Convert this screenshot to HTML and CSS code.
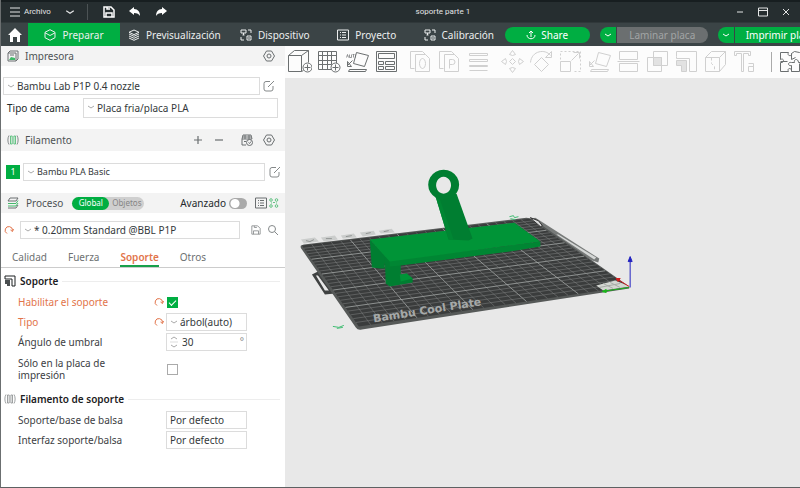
FILE: index.html
```html
<!DOCTYPE html>
<html lang="es">
<head>
<meta charset="utf-8">
<title>soporte parte 1</title>
<link rel="stylesheet" href="styles.css">
</head>
<body>
<svg class="defs" aria-hidden="true">
  <symbol id="chev" viewBox="0 0 8 8"><path d="M1 3l3 2 3-2"/></symbol>
  <symbol id="gear" viewBox="0 0 12 12"><path d="M3.500 1h5l3 5-3 5h-5l-3-5z"/><circle cx="6" cy="6" r="2"/></symbol>
  <symbol id="edit" viewBox="0 0 12 12"><path d="M7 1.500H3a2 2 0 0 0-2 2V9a2 2 0 0 0 2 2h5a2 2 0 0 0 2-2V6M5 7l6-6"/></symbol>
  <symbol id="spool" viewBox="0 0 12 12"><path d="M2 1.500C.5 4 .5 8 2 10.500M10 1.500c1.500 2.500 1.500 6.500 0 9"/><path class="tint" d="M3.500 2v8M5.200 2v8M6.900 2v8M8.500 2v8M3.500 2h1.700M3.500 10h1.700M6.900 2h1.600M6.900 10h1.600"/></symbol>
  <symbol id="undo" viewBox="0 0 10 10"><path d="M3 8.500A3.700 3.700 0 1 1 8.500 5.500M6.500 5l2 1.500L9.500 4"/></symbol>
  <symbol id="device" viewBox="0 0 12 12"><path d="M1 1h5v3H1zM2.500 6h2M3.500 4v2M7 7h4v4H7zM8 9h2M8 1h3v3M1 8v3h3"/></symbol>
  <symbol id="disk" viewBox="0 0 12 12"><path d="M1 1h7l3 3v7H1zM3 11V7h6v4M4 1v2h3"/></symbol>
</svg>
<div class="app">
  <header class="titlebar">
    <button class="menu"><svg class="ic12" viewBox="0 0 12 12"><path d="M1 2h10M1 6h10M1 10h10"/></svg>Archivo</button>
    <button class="drop" aria-label="Más"><svg class="ic10" viewBox="0 0 8 8"><path d="M1 3l3 2 3-2"/></svg></button>
    <div class="quick">
      <button aria-label="Guardar"><svg class="ic12 strong"><use href="#disk"/></svg></button>
      <button aria-label="Deshacer"><svg class="ic12 solid" viewBox="0 0 12 12"><path d="M0 5l5-4v2c4 0 6 3 6 7-1-2-3-3-6-3v2z"/></svg></button>
      <button aria-label="Rehacer"><svg class="ic12 solid" viewBox="0 0 12 12"><path d="M12 5L7 1v2C3 3 1 6 1 10c1-2 3-3 6-3v2z"/></svg></button>
    </div>
    <h1>soporte parte 1</h1>
    <div class="win">
      <button aria-label="Minimizar"><svg class="ic10" viewBox="0 0 10 10"><path d="M2 5h6"/></svg></button>
      <button aria-label="Maximizar"><svg class="ic10" viewBox="0 0 10 10"><path d="M.5 1h9v8h-9zM.5 3.500h9"/></svg></button>
      <button aria-label="Cerrar"><svg class="ic10" viewBox="0 0 10 10"><path d="M2 2l6 6M8 2L2 8"/></svg></button>
    </div>
  </header>

  <nav class="tabbar">
    <a class="home" href="#" aria-label="Inicio"><svg class="ic14 solid" viewBox="0 0 14 14"><path d="M7 0l7 7h-2v7H9V9H5v5H2V7H0z"/></svg></a>
    <a class="tab on" href="#"><svg class="ic12" viewBox="0 0 12 12"><path d="M6 .7l5 2.600v5.400l-5 2.600-5-2.600V3.300zM1 3.800L6 6.500l5-2.700"/></svg>Preparar</a>
    <a class="tab" href="#"><svg class="ic12" viewBox="0 0 12 12"><path d="M6 1l5 2.300-5 2.300-5-2.300zM1 5l5 2.300L11 5M1 7l5 2.300L11 7M1 9l5 2.300L11 9"/></svg>Previsualización</a>
    <a class="tab" href="#"><svg class="ic12"><use href="#device"/></svg>Dispositivo</a>
    <a class="tab" href="#"><svg class="ic12" viewBox="0 0 12 12"><path d="M.5 1h11v10H.5zM3 3.500h1M5 3.500h4M3 6h1M5 6h4M3 8.500h1M5 8.500h4"/></svg>Proyecto</a>
    <a class="tab" href="#"><svg class="ic12"><use href="#device"/></svg>Calibración</a>
    <div class="actions">
      <button class="pill share"><svg class="ic10" viewBox="0 0 10 10"><path d="M5 7V1M3 3l2-2 2 2M1 5c0 5 8 5 8 0"/></svg>Share</button>
      <div class="split"><button class="arrow" aria-label="Opciones de laminado"><svg class="ic8"><use href="#chev"/></svg></button><button class="main" disabled>Laminar placa</button></div>
      <div class="split"><button class="arrow" aria-label="Opciones de impresión"><svg class="ic8"><use href="#chev"/></svg></button><button class="main print">Imprimir placa</button></div>
    </div>
  </nav>

  <div class="work">
    <aside class="side">
      <div class="head"><svg class="ic12" viewBox="0 0 12 12"><path d="M1 3h8v8H1zM1 3l2-2h8v8l-2 2M3 5h4"/><path class="leaf" d="M2 10l2-3 4 1v2z"/></svg><h2>Impresora</h2><button aria-label="Ajustes de impresora"><svg class="ic12"><use href="#gear"/></svg></button></div>
      <div class="row printer">
        <div class="field"><svg class="ic8"><use href="#chev"/></svg><select aria-label="Impresora"><option>Bambu Lab P1P 0.4 nozzle</option></select></div>
        <button aria-label="Editar impresora"><svg class="ic12"><use href="#edit"/></svg></button>
      </div>
      <div class="row bed"><label for="bed">Tipo de cama</label>
        <div class="field"><svg class="ic8"><use href="#chev"/></svg><select id="bed"><option>Placa fria/placa PLA</option></select></div></div>

      <div class="head filament"><svg class="ic12 green"><use href="#spool"/></svg><h2>Filamento</h2>
        <button aria-label="Añadir"><svg class="ic10 cross" viewBox="0 0 10 10"><path d="M1 5h8M5 1v8"/></svg></button>
        <button class="minus" aria-label="Quitar"><svg class="ic10 cross" viewBox="0 0 10 10"><path d="M1 5h8"/></svg></button>
        <button class="ams" aria-label="AMS"><svg class="ic12" viewBox="0 0 12 12"><path d="M1 5l1-4h8l1 4M1 5h10M1 5v6h4M2 3h8M4 1v4M8 1v4M3 7.500h2"/><circle cx="8.500" cy="8.500" r="3"/><path d="M7.500 8.500l1 1 1.500-2"/></svg></button>
        <button aria-label="Ajustes de filamento"><svg class="ic12"><use href="#gear"/></svg></button></div>
      <div class="row spoolrow"><span class="num">1</span>
        <div class="field"><svg class="ic8"><use href="#chev"/></svg><select aria-label="Filamento 1"><option>Bambu PLA Basic</option></select></div>
        <button aria-label="Editar filamento"><svg class="ic12"><use href="#edit"/></svg></button></div>

      <div class="head process"><svg class="ic12" viewBox="0 0 12 12"><path d="M3 1h8L9 4H1zM1 11h8l2-3"/><path class="leafline" d="M1 6.500h8l2-3M1 9h8l2-3"/></svg><h2>Proceso</h2>
        <div class="seg"><button class="on">Global</button><button>Objetos</button></div>
        <label for="adv">Avanzado</label><input id="adv" class="switch" type="checkbox">
        <button class="list" aria-label="Lista"><svg class="ic12" viewBox="0 0 12 12"><path d="M.5 1h11v10H.5zM3 3.500h1M5 3.500h4M3 6h1M5 6h4M3 8.500h1M5 8.500h4"/></svg></button>
        <button class="cmp" aria-label="Comparar"><svg class="ic10 leafline" viewBox="0 0 10 10"><circle cx="2" cy="2" r="1.300"/><circle cx="7.500" cy="2" r="1.300"/><circle cx="2" cy="8" r="1.300"/><circle cx="7.500" cy="8" r="1.300"/><path d="M4 4.500l2 0M2 5h1M7 5h1"/></svg></button></div>
      <div class="row preset"><button class="reset" aria-label="Restablecer"><svg class="ic10"><use href="#undo"/></svg></button>
        <div class="field"><svg class="ic8"><use href="#chev"/></svg><select aria-label="Perfil"><option>* 0.20mm Standard @BBL P1P</option></select></div>
        <button aria-label="Guardar perfil"><svg class="ic10" viewBox="0 0 12 12"><use href="#disk"/></svg></button>
        <button aria-label="Buscar"><svg class="ic12" viewBox="0 0 12 12"><circle cx="5" cy="5" r="3.500"/><path d="M7.500 7.500L11 11"/></svg></button></div>

      <nav class="pages"><a href="#">Calidad</a><a href="#">Fuerza</a><a class="on" href="#">Soporte</a><a href="#">Otros</a></nav>

      <form class="form">
        <h3><svg class="ic12" viewBox="0 0 12 12"><path d="M1 1h10v10H8V4H1z"/><path class="fill" d="M1 5h5v6H3V9H1z"/></svg>Soporte</h3>
        <div class="opt changed"><label for="en">Habilitar el soporte</label><svg class="ic10"><use href="#undo"/></svg><input id="en" class="tick" type="checkbox" checked></div>
        <div class="opt changed"><label for="ty">Tipo</label><svg class="ic10"><use href="#undo"/></svg><div class="field"><svg class="ic8"><use href="#chev"/></svg><select id="ty"><option>árbol(auto)</option></select></div></div>
        <div class="opt"><label for="an">Ángulo de umbral</label><div class="field"><svg class="step" viewBox="0 0 8 14"><path d="M1 4l3-2 3 2M1 10l3 2 3-2"/><path class="rule" d="M0 7h8"/></svg><input id="an" type="number" value="30"><span class="deg">°</span></div></div>
        <div class="opt tall"><label for="pl">Sólo en la placa de impresión</label><input id="pl" class="tick" type="checkbox"></div>
        <h3><svg class="ic12 grey"><use href="#spool"/></svg>Filamento de soporte</h3>
        <div class="opt"><label for="ba">Soporte/base de balsa</label><div class="field plain"><select id="ba"><option>Por defecto</option></select></div></div>
        <div class="opt"><label for="inf">Interfaz soporte/balsa</label><div class="field plain"><select id="inf"><option>Por defecto</option></select></div></div>
      </form>
    </aside>

    <main class="view">
      <div class="tools">
        <button aria-label="Añadir objeto"><svg viewBox="0.5 0.5 24 24"><path d="M1 6h13v16H1zM1 6l6-5h14l-7 5M21 1v12M14 22l2-1"/><circle class="paper" cx="20" cy="18" r="4.500"/><path d="M20 15v6M17 18h6"/></svg></button>
        <button aria-label="Añadir placa"><svg viewBox="0.5 0.5 24 24"><path d="M2 2h18v18H2zM6 2v18M11 2v18M15 2v18M2 6h18M2 11h18M2 15h18"/><circle class="paper" cx="19" cy="18" r="4.500"/><path d="M19 15v6M16 18h6"/></svg></button>
        <button aria-label="Orientar"><svg viewBox="0.5 0.5 24 24"><path d="M11 3l12 3-4 11-11-3zM4 20h17l-1 2H3zM7 11l-5 5M2 12v5h4z"/><path class="fine" d="M1 8l1-3 1 3M4 5v3h2V5M7 5h2M8 5v3M10 5v3"/></svg></button>
        <button class="gap" aria-label="Organizar"><svg viewBox="0.5 0.5 24 24"><path d="M2 2h20v20H2zM4 4h16v5H4zM4 12h5v3H4zM4 17h5v3H4zM11 12h9v3h-9zM11 17h9v3h-9z"/></svg></button>
        <button disabled aria-label="Copiar 0"><svg viewBox="0.5 0.5 24 24"><path d="M6 19H2V2h12l3 3M7 5h10l4 4v13H7z"/><ellipse cx="14" cy="14" rx="3" ry="5"/></svg></button>
        <button disabled aria-label="Copiar P"><svg viewBox="0.5 0.5 24 24"><path d="M6 19H2V2h12l3 3M7 5h10l4 4v13H7zM12 19v-9h3a2.500 2.500 0 0 1 0 5h-3"/></svg></button>
        <button class="gap" disabled aria-label="Capas"><svg viewBox="0.5 0.5 24 24"><path d="M3 4h18v2H3zM3 10h18v2H3zM3 16h18v1H3zM3 21h18"/></svg></button>
        <button disabled aria-label="Mover"><svg viewBox="0.5 0.5 24 24"><path d="M9 5l3-4 3 4-3 1zM9 19l3 4 3-4-3-1zM5 9l-4 3 4 3 1-3zM19 9l4 3-4 3-1-3zM12 9l3 3-3 3-3-3z"/></svg></button>
        <button disabled aria-label="Rotar"><svg viewBox="0.5 0.5 24 24"><path d="M12 8l7 7-7 7-7-7zM1 13C2 1 16-1 21 6M22 2v6h-6z"/></svg></button>
        <button disabled aria-label="Escalar"><svg viewBox="0.5 0.5 24 24"><path d="M2 12h10v10H2zM13 11l7-7M15 3h6v6"/><path stroke-dasharray="2 2" d="M2 10V2h20v20h-8"/></svg></button>
        <button disabled aria-label="Apoyar cara"><svg viewBox="0.5 0.5 24 24"><path d="M11 3l12 3-4 11-11-3zM4 20h17l-1 2H3zM7 11l-5 5M2 12v5h4z"/></svg></button>
        <button disabled aria-label="Cortar"><svg viewBox="0.5 0.5 24 24"><path d="M3 2h18v8H3zM3 14h18v8H3zM1 12h22"/></svg></button>
        <button disabled aria-label="Booleano"><svg viewBox="0.5 0.5 24 24"><path d="M2 8h14v14H2zM8 2h14v14H8z"/><path class="hatch" d="M8 8h8v8H8z"/></svg></button>
        <button disabled aria-label="Pintar soportes"><svg viewBox="0.5 0.5 24 24"><path d="M2 7V2h20v20h-7V9H2z"/><path class="hatch" d="M2 11h10v11H7v-6H2z"/></svg></button>
        <button disabled aria-label="Costura"><svg viewBox="0.5 0.5 24 24"><path d="M2 8h14v14H2zM2 8l6-6h14l-6 6M22 2v13l-6 7"/><path stroke-dasharray="3 2" d="M8 8v6l3 3v5"/></svg></button>
        <button class="sep" disabled aria-label="Texto"><svg viewBox="0.5 0.5 24 24"><path d="M2 2h16v4h-2V4h-5v18H9V4H4v2H2z"/><path d="M16 14h5v8M21 17h-5v5h5"/></svg></button>
        <button aria-label="Ensamblar"><svg viewBox="0.5 0.5 24 24"><path d="M1 3h8c-2 4 4 4 3 1l3-2 5 1 3 3M1 3v7c4-2 4 4 0 3v9h8c-2-4 4-4 3 0h8v-8M12 4v6M12 22v-6c-4 1-4-4 0-3h3c-1-4 4-4 4 0h4M12 10l4-2M1 12h7"/></svg></button>
      </div>
      <svg class="scene" viewBox="285 78 515 410" preserveAspectRatio="xMinYMin meet" role="img" aria-label="Placa de impresión con el modelo">
        <g class="labels"><path d="M301 240l14-2 4 4-15 2zM321 238l14-2 3 4-14 2zM341 236l13-2 3 4-14 1zM360 233l14-2 2 4-13 2zM379 231l13-2 3 4-14 1z"/><path class="mark" d="M306 241l4 1 4-2M326 239h6M346 237l6-1M366 234l5-1M384 232l5-1"/></g>
        <path class="dark" fill-rule="evenodd" d="M312 275l6-3 17 22-10 1zM316 276l9 15h4l-11-15z"/>
        <path class="rim" d="M531 219l5-1 64 41-1 4-6-2-54-35z"/>
        <path class="strip" d="M557 235l38 25 2-2-38-23z"/>
        <path class="edge" d="M301 246q-1 2 1 4l54 78q2 3 6 2l268-41v-2L536 221q-4-3-9-3L304 245z"/>
        <path class="plate" d="M302 246L530 219 629 287 359 327z"/>
        <g id="grid"></g>
        <path class="knob" d="M531 218l8 3 4 5-2 1-7-6z"/>
        <text class="brand" transform="translate(374 323) rotate(-9)">Bambu Cool Plate</text>
        <path class="patch" d="M597 286l19-5 15 6-27 4z"/><path class="patchline" d="M604 284l10 5M611 283l10 5M600 288l21-4"/>
        <path class="squig" d="M333 327l6 1 5-2M337 329l6-1M510 217l4-1 1 2 4-1M511 219l5 1"/>
        <path class="g2" d="M370 240l20 21-5 3v5h-5l-8-1z"/>
        <path class="g2" d="M385 258l16 2v16l6-2 6 5v4l-23 4-4-3z"/>
        <path class="g1" d="M400 275l7-1 6 5-12 3z"/>
        <path class="g3" d="M390 261l151-19v5l-24 4-116 15-11 1z"/>
        <path class="g1" d="M370 240l145-17 26 19-151 20z"/>
        <path class="g2" d="M436 197l21-3 16 45-4 2-20-1z"/>
        <path class="g3" d="M436 197l3-1 15 44h-5z"/>
        <path class="g2" fill-rule="evenodd" d="M444 170a15.500 15 0 1 0 .1 0zM444 177a7.500 8.500 0 1 1-.1 0z"/>
        <g class="axes"><path class="red" d="M630 287l-13-8"/><path class="grn" d="M630 288l-27 4"/><path class="blu" d="M631 288v-28M629 262l2-5 2 5z"/><path class="red" d="M621 279l-4 0 2 3z"/><path class="grn" d="M607 290l-4 2 4 1z"/></g>
      </svg>
    </main>
  </div>
</div>
<script src="grid.js"></script>
</body>
</html>
```
FILE: styles.css
```css
* { box-sizing: border-box; }
:root { --green: #00ae42; --text: #3c4043; --line: #dcdcdc; --orange: #e2744a; }
body { margin: 0; font: 10px/12px "Noto Sans", "Open Sans", sans-serif; color: var(--text); overflow: hidden; }
button, select, input { font: inherit; color: inherit; margin: 0; padding: 0; border: 0; background: none; }
button { display: flex; align-items: center; justify-content: center; flex: none; }
a { color: inherit; text-decoration: none; }
h1, h2, h3 { margin: 0; font: inherit; }
svg { display: block; flex: none; fill: none; stroke: currentColor; stroke-width: 1; }
.defs { position: absolute; width: 0; height: 0; }
.ic8 { width: 8px; height: 8px; }
.ic10 { width: 10px; height: 10px; }
.ic12 { width: 12px; height: 12px; }
.ic14 { width: 14px; height: 14px; }
.solid { fill: currentColor; stroke: none; }
.strong { stroke-width: 1.5; }
.cross { stroke-width: 1.2; }
.app { display: flex; flex-direction: column; height: 100vh; border-left: 1px solid #6b6f70; border-bottom: 1px solid #5d6162; }

.titlebar { display: grid; grid-template-columns: auto auto auto 1fr auto; align-items: center; flex: none; height: 22px; padding-left: 8px; background: #262e30; border-top: 2px solid #171e20; color: #e3e5e5; font: 8px/12px Roboto, sans-serif; }
.menu { gap: 3px; }
.drop { padding: 0 12px 0 14px; height: 16px; border-right: 1px solid #4c5355; }
.quick { display: flex; gap: 14px; padding-left: 15px; color: #fff; }
.titlebar h1 { justify-self: center; padding-right: 16px; }
.win { display: flex; gap: 13px; padding-right: 9px; }

.tabbar { display: flex; flex: none; height: 24px; background: #3b4446; color: #eceeee; overflow: hidden; border-top: 1px solid #30383a; }
.home { display: flex; flex: none; align-items: center; justify-content: center; width: 27px; color: #fff; }
.tab { display: flex; flex: none; align-items: center; justify-content: center; gap: 6px; min-width: 92px; padding: 0 8px; }
.tab.on { background: var(--green); }
.actions { display: flex; align-items: center; flex: none; gap: 10px; }
.pill, .split { height: 16px; border-radius: 8px; background: var(--green); color: #fff; overflow: hidden; }
.share { width: 85px; gap: 5px; }
.split { display: flex; background: #3b4446; gap: 1px; flex: none; }
.arrow { width: 16px; background: var(--green); }
.main { width: 91px; background: var(--green); }
.main:disabled { background: #6b6f70; color: #a2a5a5; }

.work { display: flex; flex: 1; min-height: 0; }
.side { width: 284px; flex: none; background: #fff; overflow: hidden; }
.head { display: flex; align-items: center; height: 20px; padding: 0 10px 0 6px; background: #f3f3f3; color: #4d5254; }
.head > svg, .head button svg { color: #6a6e70; }
.head h2 { flex: 1; padding-left: 6px; font-size: 10px; }
.leaf { fill: #3fb968; stroke: none; }
.leafline { stroke: #43b76b; }
.tint { stroke: var(--tint, currentColor); }
.green { --tint: #43b76b; stroke-width: .8; }
.grey { color: #85898a; stroke-width: .8; }
.row { display: flex; align-items: center; gap: 8px; }
.field { position: relative; flex: 1; height: 18px; border: 1px solid var(--line); color: #34393b; }
.field select, .field input { appearance: none; display: block; width: 100%; height: 16px; padding-left: 13px; outline: 0; border-radius: 0; }
.field > svg { position: absolute; left: 3px; top: 4px; color: #aaa; pointer-events: none; }
.row > button { color: #85898a; }
.printer { margin: 11px 9px 3px 2px; gap: 2px; }
.bed { padding: 0 7px 0 6px; gap: 0; }
.bed label { width: 76px; color: #24292b; }
.bed .field { height: 20px; }
.bed .field select { height: 18px; }
.printer button, .spoolrow button { width: 14px; }
.filament { height: 22px; margin-top: 11px; }
.minus { margin-left: 11px; }
.ams { margin: 0 10px 0 17px; }
.spoolrow { margin: 12px 3px 12px 5px; gap: 3px; font-size: 9px; }
.num { width: 14px; line-height: 14px; text-align: center; background: var(--green); color: #fff; }
.head.process h2 { flex: none; padding: 0 9px 0 7px; }
.process { padding-right: 6px; }
.seg { display: flex; height: 13px; border-radius: 7px; background: #cfcfcf; margin-right: auto; font-size: 8px; }
.seg button { width: 35px; height: 13px; color: #858585; }
.seg .on { width: 37px; border-radius: 7px; background: var(--green); color: #fff; }
.process label { color: #24292b; }
.switch { appearance: none; flex: none; width: 18px; height: 11px; margin-left: 3px; border-radius: 6px; background: radial-gradient(circle at 6px 50%, #fff 4px, #aaa 5px); }
.list { margin: 0 2px 0 8px; }
.head .cmp svg { color: #43b76b; stroke-width: .8; }
.preset { margin: 8px 6px 9px 3px; gap: 6px; }
.preset .field { margin-right: 5px; }
.row > .reset { color: var(--orange); }
.pages { display: flex; gap: 21px; padding-left: 11px; height: 20px; border-bottom: 1px solid #ccc; color: #6d7172; }
.pages a { height: 19px; line-height: 18px; }
.pages .on { color: var(--orange); font-weight: 600; border-bottom: 2px solid #18a04b; }

.form h3 { display: flex; align-items: center; gap: 4px; padding: 0 5px 0 3px; height: 22px; font-weight: 600; color: #1c2123; margin-top: 2px; }
.form h3::after { content: ""; flex: 1; height: 1px; background: #ededed; }
.fill { fill: #4a4e50; stroke: none; }
.opt { display: grid; grid-template-columns: 132px 14px 81px; align-items: center; height: 20px; margin-left: 17px; gap: 0 1px; }
.opt > label { max-width: 108px; grid-column: 1; white-space: nowrap; }
.opt > * { grid-row: 1; }
.opt > .ic10 { grid-column: 2; justify-self: start; margin-left: 3px; }
.opt > input, .opt > .field { grid-column: 3; }
.opt.tall { height: 34px; }
.opt.tall label { white-space: normal; }
.changed { color: var(--orange); }
.field .step { top: 1px; width: 8px; height: 14px; }
.rule { stroke: #ddd; }
.field input { appearance: textfield; padding-left: 15px; }
.field input::-webkit-inner-spin-button { appearance: none; }
.deg { position: absolute; right: 2px; top: 1px; color: #888; }
.field.plain select { padding-left: 3px; }
.tick { appearance: none; width: 11px; height: 11px; margin-left: 1px; border: 1px solid #aaa; background: #fff; }
.tick:checked { border-color: var(--green); background: var(--green); display: grid; place-items: center; }
.tick:checked::after { content: ""; width: 6px; height: 3px; border: solid #fff; border-width: 0 0 1px 1px; rotate: -45deg; }

.view { display: flex; flex-direction: column; flex: 1; min-width: 0; background: #e8e8e8; }
.tools { display: flex; align-items: center; gap: 5px; height: 32px; flex: none; padding-left: 3px; background: #fcfcfc; overflow: hidden; }
.tools svg { width: 24px; height: 24px; }
.tools button { color: #6b6f70; }
.tools button:disabled { color: #d0d0d0; }
.tools .gap { margin-right: 5px; }
.tools .sep { position: relative; margin-right: 18px; }
.tools .sep::after { content: ""; position: absolute; left: 38px; top: 2px; height: 20px; border-left: 1px solid #aaa; }
.paper { fill: #fcfcfc; }
.hatch { fill: #e2e2e2; }
.fine { stroke-width: .7; }

.scene { width: 100%; flex: 1; min-height: 0; }
.scene path { stroke: none; }
.labels { fill: #cbcdcc; }
.scene .mark { fill: none; stroke: #929594; }
.dark { fill: #3f4141; }
.rim { fill: #777a79; }
.strip { fill: #d5d7d6; }
.edge { fill: #565958; }
.plate { fill: #3a3c3c; }
#grid .thin { stroke: #838685; stroke-width: .5; }
#grid .bold { stroke: #a5a8a7; stroke-width: .8; }
.knob { fill: #d9dada; }
.scene .knob { stroke: #333; }
.brand { font: bold 11px "DejaVu Sans", sans-serif; fill: #a6a9a8; stroke: none; }
.patch { fill: #d4d7d2; }
.scene .patchline { stroke: #a7aaa6; }
.scene .squig { stroke: #42bd73; fill: none; }
.g1 { fill: #009437; }
.g2 { fill: #007e31; }
.g3 { fill: #008633; }
.scene .red { stroke: #d02020; fill: #d02020; }
.scene .grn { stroke: #1bb51b; fill: #1bb51b; }
.scene .blu { stroke: #2222c0; fill: #2222c0; }
```
FILE: grid.js
```js
// Draws the bed grid: a unit square projected onto the plate's four corners.
const corners = [[302, 246], [530, 219], [629, 287], [359, 327]];
const [[x0, y0], [x1, y1], [x2, y2], [x3, y3]] = corners;
const dx1 = x1 - x2, dx2 = x3 - x2, dx3 = x0 - x1 + x2 - x3;
const dy1 = y1 - y2, dy2 = y3 - y2, dy3 = y0 - y1 + y2 - y3;
const det = dx1 * dy2 - dx2 * dy1;
const g = (dx3 * dy2 - dx2 * dy3) / det;
const h = (dx1 * dy3 - dx3 * dy1) / det;
function project(u, v) {
  const w = g * u + h * v + 1;
  return [((x1 - x0 + g * x1) * u + (x3 - x0 + h * x3) * v + x0) / w,
          ((y1 - y0 + g * y1) * u + (y3 - y0 + h * y3) * v + y0) / w];
}
const grid = document.getElementById("grid");
function line(a, b, bold) {
  const el = document.createElementNS("http://www.w3.org/2000/svg", "line");
  el.setAttribute("x1", a[0]); el.setAttribute("y1", a[1]);
  el.setAttribute("x2", b[0]); el.setAttribute("y2", b[1]);
  el.setAttribute("class", bold ? "bold" : "thin");
  grid.append(el);
}
const cells = 25;
for (let i = 1; i < cells; i++) {
  const t = i / cells;
  line(project(t, 0), project(t, 1), i % 5 === 0);
  line(project(0, t), project(1, t), i % 5 === 0);
}
```
